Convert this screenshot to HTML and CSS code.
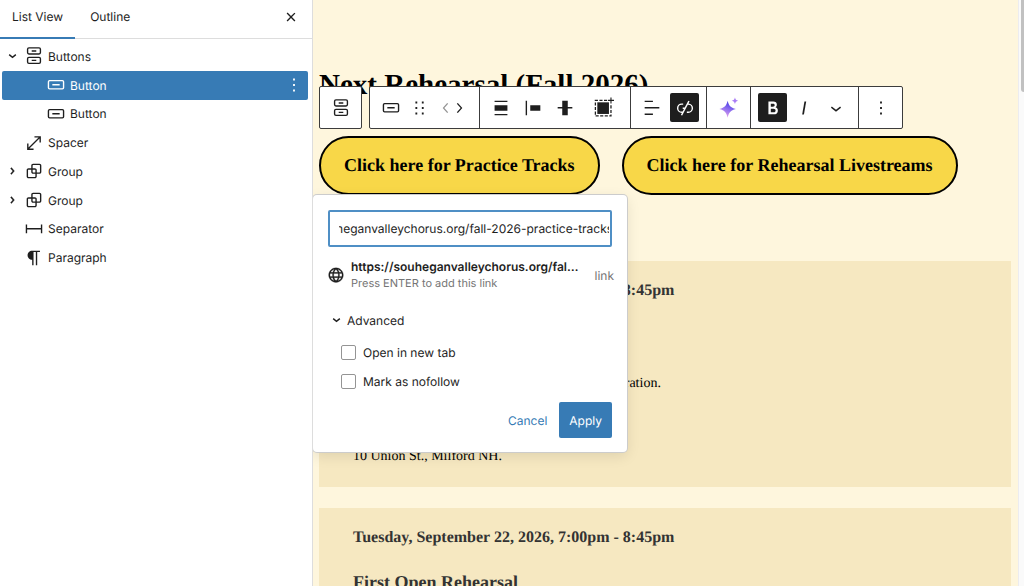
FILE: index.html
```html
<!DOCTYPE html>
<html lang="en">
<head>
    <meta charset="UTF-8">
    <meta name="viewport" content="width=device-width, initial-scale=1.0">
    <title>Edit Page</title>
    <link rel="stylesheet" href="styles.css">
</head>
<body>
    <!-- Shared icons -->
    <svg class="sprite" aria-hidden="true">
        <symbol id="i-buttons" viewBox="0 0 24 24">
            <g fill="none" stroke="currentColor" stroke-width="1.5">
                <rect x="5" y="3.2" width="14" height="6.6" rx="1.5"/>
                <rect x="5" y="13.5" width="14" height="6.6" rx="1.5"/>
                <path d="M9.5 6.5h5M9.5 16.8h5"/>
            </g>
        </symbol>
        <symbol id="i-button" viewBox="0 0 24 24">
            <path d="M8 12.5h8V11H8v1.5Z M19 6.5H5a2 2 0 0 0-2 2V15a2 2 0 0 0 2 2h14a2 2 0 0 0 2-2V8.5a2 2 0 0 0-2-2ZM5 8h14a.5.5 0 0 1 .5.5V15a.5.5 0 0 1-.5.5H5a.5.5 0 0 1-.5-.5V8.5A.5.5 0 0 1 5 8Z" fill-rule="evenodd"/>
        </symbol>
        <symbol id="i-group" viewBox="0 0 24 24">
            <path d="M18 4h-7c-1.1 0-2 .9-2 2v3H6c-1.1 0-2 .9-2 2v7c0 1.1.9 2 2 2h7c1.1 0 2-.9 2-2v-3h3c1.1 0 2-.9 2-2V6c0-1.1-.9-2-2-2zm-4.5 14c0 .3-.2.5-.5.5H6c-.3 0-.5-.2-.5-.5v-7c0-.3.2-.5.5-.5h3V13c0 1.1.9 2 2 2h2.5v3zm0-4.5H11c-.3 0-.5-.2-.5-.5v-2.5H13c.3 0 .5.2.5.5v2.5zm5-.5c0 .3-.2.5-.5.5h-3V11c0-1.1-.9-2-2-2h-2.5V6c0-.3.2-.5.5-.5h7c.3 0 .5.2.5.5v7z"/>
        </symbol>
        <symbol id="i-right" viewBox="0 0 24 24">
            <path d="M10.86 8.04l3.42 3.99-3.42 3.99-1.14-.98 2.58-3.01-2.58-3.01 1.14-.98Z" stroke="currentColor" stroke-width=".3"/>
        </symbol>
        <symbol id="i-down" viewBox="0 0 24 24">
            <path d="M8.2 10.4l3.8 3.2 3.8-3.2" fill="none" stroke="currentColor" stroke-width="1.6"/>
        </symbol>
        <symbol id="i-more" viewBox="0 0 24 24">
            <path d="M13 19h-2v-2h2v2zm0-6h-2v-2h2v2zm0-6h-2V5h2v2z"/>
        </symbol>
    </svg>

    <aside class="sidebar">
        <div class="tabs">
            <button type="button" class="tab active">List View</button>
            <button type="button" class="tab">Outline</button>
            <button type="button" class="close" aria-label="Close">
                <svg class="icon" viewBox="0 0 24 24"><path d="M12 13.06l3.712 3.713 1.061-1.06L13.061 12l3.712-3.712-1.06-1.06L12 10.938 8.288 7.227l-1.061 1.06L10.939 12l-3.712 3.712 1.06 1.061L12 13.061z"/></svg>
            </button>
        </div>

        <ul class="block-list">
            <li><a href="#buttons" class="block">
                <svg class="icon arrow"><use href="#i-down"/></svg>
                <svg class="icon"><use href="#i-buttons"/></svg>
                <span>Buttons</span>
            </a></li>
            <li><a href="#button-1" class="block nested selected">
                <svg class="icon"><use href="#i-button"/></svg>
                <span>Button</span>
                <svg class="icon more"><use href="#i-more"/></svg>
            </a></li>
            <li><a href="#button-2" class="block nested">
                <svg class="icon"><use href="#i-button"/></svg>
                <span>Button</span>
            </a></li>
            <li><a href="#spacer" class="block leaf">
                <svg class="icon" viewBox="0 0 24 24"><path d="M7 18h4.5v1.5h-7v-7H6V17L17 6h-4.5V4.5h7v7H18V7L7 18Z"/></svg>
                <span>Spacer</span>
            </a></li>
            <li><a href="#group-1" class="block">
                <svg class="icon arrow"><use href="#i-right"/></svg>
                <svg class="icon"><use href="#i-group"/></svg>
                <span>Group</span>
            </a></li>
            <li><a href="#group-2" class="block">
                <svg class="icon arrow"><use href="#i-right"/></svg>
                <svg class="icon"><use href="#i-group"/></svg>
                <span>Group</span>
            </a></li>
            <li><a href="#separator" class="block leaf">
                <svg class="icon" viewBox="0 0 24 24"><path d="M4.5 12.5v4H3V7h1.5v3.987h15V7H21v9.5h-1.5v-4h-15Z"/></svg>
                <span>Separator</span>
            </a></li>
            <li><a href="#paragraph" class="block leaf">
                <svg class="icon" viewBox="0 0 24 24"><path d="m9.996 14v-.225l.004 0v6.225h1.5v-14.5h2.5v14.5h1.5v-14.5h3v-1.5h-8.504c-2.761 0-5 2.239-5 5 0 2.761 2.239 5 5 5z"/></svg>
                <span>Paragraph</span>
            </a></li>
        </ul>
    </aside>

    <main class="canvas">
        <h2 class="page-title">Next Rehearsal (Fall 2026)</h2>

        <div class="cta-row" id="buttons">
            <a href="#practice" class="cta" id="button-1">Click here for Practice Tracks</a>
            <a href="#livestreams" class="cta" id="button-2">Click here for Rehearsal Livestreams</a>
        </div>

        <section class="card" id="group-1">
            <h4>Tuesday, September 15, 2026, 7:00pm - 8:45pm</h4>
            <p>Please come early for check-in and chorus registration.</p>
            <p>10 Union St., Milford NH.</p>
        </section>

        <section class="card" id="group-2">
            <h4>Tuesday, September 22, 2026, 7:00pm - 8:45pm</h4>
            <h3>First Open Rehearsal</h3>
        </section>

        <!-- Block toolbar -->
        <div class="toolbar">
            <div class="bar">
                <div class="bar-group">
                    <button type="button" class="tool wide" aria-label="Select parent block: Buttons"><svg class="icon"><use href="#i-buttons"/></svg></button>
                </div>
            </div>
            <div class="bar">
                <div class="bar-group padded">
                    <button type="button" class="tool" aria-label="Button"><svg class="icon"><use href="#i-button"/></svg></button>
                    <button type="button" class="tool drag" aria-label="Drag"><svg class="icon" viewBox="0 0 24 24"><path d="M7 7h2V5H7v2zm0 6h2v-2H7v2zm0 6h2v-2H7v2zm7-14v2h2V5h-2zm0 8h2v-2h-2v2zm0 6h2v-2h-2v2z"/></svg></button>
                    <div class="movers">
                        <button type="button" class="tool mover" aria-label="Move left" disabled><svg class="icon" viewBox="0 0 24 24"><path d="M14.6 7l-1.2-1L8 12l5.4 6 1.2-1-4.6-5z"/></svg></button>
                        <button type="button" class="tool mover" aria-label="Move right"><svg class="icon" viewBox="0 0 24 24"><path d="M10.6 6L9.4 7l4.6 5-4.6 5 1.2 1 5.4-6z"/></svg></button>
                    </div>
                </div>
                <div class="bar-group padded">
                    <button type="button" class="tool" aria-label="Align"><svg class="icon" viewBox="0 0 24 24"><path d="M19 5.5H5V4h14v1.5ZM19 20H5v-1.5h14V20ZM5 9h14v6H5V9Z"/></svg></button>
                    <button type="button" class="tool" aria-label="Justify left"><svg class="icon" viewBox="0 0 24 24"><path d="M9 9v6h11V9H9zM4 20h1.5V4H4v16z"/></svg></button>
                    <button type="button" class="tool" aria-label="Vertical align"><svg class="icon" viewBox="0 0 24 24"><path d="M20 11h-5V4H9v7H4v1.5h5V20h6v-7.5h5z"/></svg></button>
                    <button type="button" class="tool wide" aria-label="Add to group">
                        <svg class="icon" viewBox="0 0 24 24">
                            <path d="M5.8 5.8h12.7v12.7H5.8z"/>
                            <path d="M16.5 3.7H3.7V20.7H20.7V8.5" fill="none" stroke="currentColor" stroke-width="1.4" stroke-dasharray="3.4 1.6"/>
                            <path d="M20.7 .5v6.5M17.5 3.7h6.5" fill="none" stroke="currentColor" stroke-width="1.2"/>
                        </svg>
                    </button>
                </div>
                <div class="bar-group padded">
                    <button type="button" class="tool" aria-label="Align text"><svg class="icon" viewBox="0 0 24 24"><path d="M13 5.5H4V4h9v1.5Zm7 7H4V11h16v1.5Zm-7 7H4V18h9v1.5Z"/></svg></button>
                    <button type="button" class="tool pressed" aria-label="Unlink"><svg class="icon" viewBox="0 0 24 24"><path d="M17.031 4.703 15.576 4l-1.56 3H14v.03l-2.324 4.47H9.5V13h1.396l-1.502 2.889h-.95a3.694 3.694 0 0 1 0-7.389H10V7H8.444a5.194 5.194 0 1 0 0 10.389h.17L7.5 19.53l1.416.719L15.049 8.5h.507a3.694 3.694 0 0 1 0 7.39H14v1.5h1.556a5.194 5.194 0 0 0 .273-10.383l1.202-2.304Z"/></svg></button>
                </div>
                <div class="bar-group">
                    <button type="button" class="tool wide" aria-label="AI Assistant">
                        <svg class="icon" viewBox="0 0 24 24">
                            <defs>
                                <linearGradient id="spark" x1="0.7" y1="0" x2="0.3" y2="1">
                                    <stop offset="0.2" stop-color="#5b4be8"/>
                                    <stop offset="0.6" stop-color="#a07af0"/>
                                    <stop offset="1" stop-color="#f0a8e8"/>
                                </linearGradient>
                            </defs>
                            <path d="M10.5 4C12 9.5 13.5 11.5 19.5 13C13.5 14.5 12 16.7 10.5 22.5C9 16.7 7.5 14.5 1.5 13C7.5 11.5 9 9.5 10.5 4Z" fill="url(#spark)"/>
                            <path d="M18.5 .5c.6 2.3 1.2 2.9 3.5 3.5-2.3.6-2.9 1.2-3.5 3.5-.6-2.3-1.2-2.9-3.5-3.5 2.3-.6 2.9-1.2 3.5-3.5z" fill="#a97cf5"/>
                        </svg>
                    </button>
                </div>
                <div class="bar-group padded">
                    <button type="button" class="tool pressed" aria-label="Bold"><svg class="icon" viewBox="0 0 24 24"><path d="M14.7 11.3c1-.6 1.5-1.6 1.5-3 0-2.3-1.3-3.4-4-3.4H7v14h5.8c1.4 0 2.5-.3 3.3-1 .8-.7 1.2-1.7 1.2-2.9.1-1.9-.8-3.1-2.6-3.7zm-5.1-4h2.3c.6 0 1.1.1 1.4.4.3.3.5.7.5 1.2s-.2 1-.5 1.2c-.3.3-.8.4-1.4.4H9.6V7.3zm4.6 9c-.4.3-1 .4-1.7.4H9.6v-3.9h2.9c.7 0 1.3.2 1.7.5.4.3.6.8.6 1.5s-.2 1.2-.6 1.5z"/></svg></button>
                    <button type="button" class="tool" aria-label="Italic"><svg class="icon" viewBox="0 0 24 24"><path d="M12.5 5L10 19h1.9l2.5-14z"/></svg></button>
                    <button type="button" class="tool" aria-label="More formatting"><svg class="icon" viewBox="0 0 24 24"><path d="M17.5 11.6L12 16l-5.5-4.4.9-1.2L12 14l4.5-3.6 1 1.2z"/></svg></button>
                </div>
                <div class="bar-group">
                    <button type="button" class="tool wide" aria-label="Options"><svg class="icon"><use href="#i-more"/></svg></button>
                </div>
            </div>
        </div>

        <!-- Link popover -->
        <form class="link-popover">
            <input type="text" id="linkUrl" class="url-input" aria-label="Link" value="https://souheganvalleychorus.org/fall-2026-practice-tracks">

            <button type="button" class="suggestion">
                <svg class="icon" viewBox="0 0 24 24"><path d="M12 3.3c-4.8 0-8.8 3.9-8.8 8.8 0 4.8 3.9 8.8 8.8 8.8s8.8-3.9 8.8-8.8c0-4.8-4-8.8-8.8-8.8zm6.5 5.5h-2.6C15.4 7.3 14.8 6 14 5c2 .6 3.6 2 4.5 3.8zm.7 3.2c0 .6-.1 1.2-.2 1.8h-2.9c.1-.6.1-1.2.1-1.8s-.1-1.2-.1-1.8H19c.2.6.2 1.2.2 1.8zM12 18.7c-1-.7-1.8-1.9-2.3-3.5h4.6c-.5 1.6-1.3 2.9-2.3 3.5zm-2.6-4.9c-.1-.6-.1-1.1-.1-1.8 0-.6.1-1.2.1-1.8h5.2c.1.6.1 1.1.1 1.8s-.1 1.2-.1 1.8H9.4zM4.8 12c0-.6.1-1.2.2-1.8h2.9c-.1.6-.1 1.2-.1 1.8 0 .6.1 1.2.1 1.8H5c-.2-.6-.2-1.2-.2-1.8zM12 5.3c1 .7 1.8 1.9 2.3 3.5H9.7c.5-1.6 1.3-2.9 2.3-3.5zM10 5c-.8 1-1.4 2.3-1.8 3.8H5.5C6.4 7 8 5.6 10 5zM5.5 15.3h2.6c.4 1.5 1 2.8 1.8 3.7-1.8-.6-3.5-2-4.4-3.7zM14 19c.8-1 1.4-2.2 1.8-3.7h2.6C17.6 17 16 18.4 14 19z" stroke="currentColor" stroke-width=".3"/></svg>
                <span class="suggestion-text">
                    <span class="suggestion-url">https://souheganvalleychorus.org/fal…</span>
                    <span class="hint">Press ENTER to add this link</span>
                </span>
                <span class="kind">link</span>
            </button>

            <button type="button" class="advanced" aria-expanded="true">
                <svg class="icon arrow"><use href="#i-down"/></svg>
                Advanced
            </button>

            <div class="options">
                <label class="option"><input type="checkbox" name="newTab"> Open in new tab</label>
                <label class="option"><input type="checkbox" name="nofollow"> Mark as nofollow</label>
            </div>

            <div class="actions">
                <button type="button" class="cancel">Cancel</button>
                <button type="submit" class="apply">Apply</button>
            </div>
        </form>
    </main>

    <div class="scroll-track"><div class="scroll-thumb"></div></div>

    <script>
        // Keep the end of a long URL in view
        const linkUrl = document.getElementById('linkUrl');
        linkUrl.scrollLeft = linkUrl.scrollWidth - linkUrl.clientWidth - 4;
    </script>
</body>
</html>
```

FILE: styles.css
```css
* {
    box-sizing: border-box;
}

body {
    margin: 0;
    height: 100vh;
    display: flex;
    overflow: hidden;
    font-family: Inter, "Liberation Sans", sans-serif;
    font-size: 12px;
    color: #1e1e1e;
    background-color: #fff;
    text-rendering: geometricPrecision;
}

button {
    font: inherit;
    color: inherit;
    background: none;
    border: none;
    padding: 0;
    cursor: pointer;
    text-rendering: inherit;
}

.sprite {
    display: none;
}

.icon {
    width: 22px;
    height: 22px;
    flex: none;
    display: block;
    fill: currentColor;
    overflow: visible;
}

.icon.arrow {
    width: 21px;
}

/* Sidebar */
.sidebar {
    width: 313px;
    flex: none;
    border-right: 1px solid #ddd;
}

.tabs {
    display: flex;
    height: 39px;
    border-bottom: 1px solid #ddd;
}

.tab {
    padding: 0 12px 5px;
}

.tab + .tab {
    padding-left: 15px;
}

.tab.active {
    box-shadow: inset 0 -1px #377bb5, 0 1px #377bb5;
}

.close {
    margin-left: auto;
    padding: 0 10px 5px;
}

.block-list {
    list-style: none;
    margin: 0;
    padding: 3px 4px 0 2px;
    display: grid;
    grid-auto-rows: 1fr;
    height: 233px;
}

.block {
    display: flex;
    align-items: center;
    height: 100%;
    color: inherit;
    text-decoration: none;
    border-radius: 2px;
}

.block span {
    margin-left: 3px;
}

.block.leaf {
    padding-left: 21px;
}

.block.nested {
    padding-left: 43px;
}

.block.selected {
    background-color: #377bb5;
    color: #fff;
}

.block .more {
    margin-left: auto;
    margin-right: 3px;
}

/* Page content */
.canvas {
    position: relative;
    flex: 1;
    min-width: 0;
    padding: 67px 7px 0 6px;
    background-color: #fef6dd;
    color: #000;
    font-family: "Liberation Serif", "Times New Roman", serif;
    overflow: hidden;
}

.page-title {
    margin: 0 0 33px;
    font-size: 29px;
    line-height: 36px;
}

.cta-row {
    display: flex;
    gap: 22px;
    margin-bottom: 66px;
}

.cta {
    padding: 0 23px;
    border: 2px solid #000;
    border-radius: 30px;
    background-color: #f8d748;
    color: #000;
    font-size: 18px;
    font-weight: bold;
    line-height: 55px;
    text-decoration: none;
    white-space: nowrap;
}

.card {
    margin-bottom: 21px;
    padding: 19px 34px;
    background-color: #f6e8c1;
}

.card h3,
.card h4 {
    margin: 0 0 21px;
    color: #333;
}

.card h4 {
    font-size: 16px;
    line-height: 22px;
}

.card h3 {
    font-size: 18px;
    line-height: 24px;
}

.card p {
    margin: 51px 0 0;
    font-size: 14px;
    line-height: 22px;
}

.card h4 + p {
    margin-top: 71px;
}

/* Block toolbar, floats over the page */
.toolbar {
    position: absolute;
    top: 86px;
    left: 6px;
    display: flex;
    gap: 7px;
    color: #1e1e1e;
}

.bar {
    display: flex;
    height: 43px;
    background-color: #fff;
    border: 1px solid #3c3c3c;
    border-radius: 2px;
}

.bar-group {
    display: flex;
    align-items: center;
}

.bar-group + .bar-group {
    border-left: 1px solid #3c3c3c;
}

.bar-group.padded {
    padding: 0 6px 0 5px;
}

.tool {
    width: 32px;
    height: 29px;
    display: flex;
    align-items: center;
    justify-content: center;
}

.tool.wide {
    width: 43px;
}

.bar-group:only-child .tool.wide {
    width: 41px;
}

.tool.drag {
    width: 25px;
}

.movers {
    display: flex;
    justify-content: center;
    width: 41px;
}

.tool.mover {
    width: 13px;
}

.tool.mover .icon {
    width: 20px;
}

.tool:disabled {
    color: #949494;
}

.tool.pressed {
    width: 29px;
    margin: 0 1px 0 2px;
    border-radius: 2px;
    background-color: #1e1e1e;
    color: #fff;
}

/* Link popover */
.link-popover {
    position: absolute;
    top: 195px;
    left: 0;
    width: 314px;
    padding: 15px 15px 14px;
    background-color: #fff;
    border-radius: 4px;
    box-shadow: 0 0 0 1px #ccc, 0 4px 14px rgba(0, 0, 0, 0.1);
    font-family: Inter, "Liberation Sans", sans-serif;
    color: #1e1e1e;
}

.url-input {
    display: block;
    width: 100%;
    height: 37px;
    padding: 0 1px 0 9px;
    border: 2px solid #4f8fc5;
    border-radius: 2px;
    outline: none;
    font: inherit;
    color: inherit;
    text-rendering: inherit;
}

.suggestion {
    display: flex;
    align-items: center;
    width: 100%;
    margin-top: 11px;
    text-align: left;
}

.suggestion .icon {
    width: 20px;
    height: 20px;
    margin-right: 5px;
    margin-left: -2px;
}

.suggestion-text {
    flex: 1;
}

.suggestion-url,
.hint {
    display: block;
    line-height: 17px;
}

.suggestion-url {
    font-weight: 600;
}

.hint {
    font-size: 11px;
    color: #757575;
}

.kind {
    color: #757575;
    margin-right: -2px;
}

.advanced {
    display: flex;
    align-items: center;
    margin: 17px 0 10px -2px;
    height: 22px;
}

.options {
    display: flex;
    flex-direction: column;
    gap: 7px;
    padding-left: 13px;
}

.option {
    display: flex;
    align-items: center;
    gap: 7px;
    height: 22px;
}

.option input {
    appearance: none;
    width: 15px;
    height: 15px;
    margin: 0;
    border: 1px solid #949494;
    border-radius: 2px;
}

.actions {
    display: flex;
    justify-content: flex-end;
    gap: 2px;
    margin-top: 10px;
}

.cancel,
.apply {
    height: 36px;
    padding: 0 10px;
}

.cancel {
    color: #377bb5;
}

.apply {
    background-color: #377bb5;
    color: #fff;
    border-radius: 2px;
}

/* Scrollbar of the editor canvas */
.scroll-track {
    width: 6px;
    flex: none;
    background-color: #fafafa;
    border-left: 1px solid #ececf0;
}

.scroll-thumb {
    width: 3px;
    height: 92px;
    margin-left: auto;
    background-color: #c1c1c1;
    border-bottom-left-radius: 3px;
}
```
